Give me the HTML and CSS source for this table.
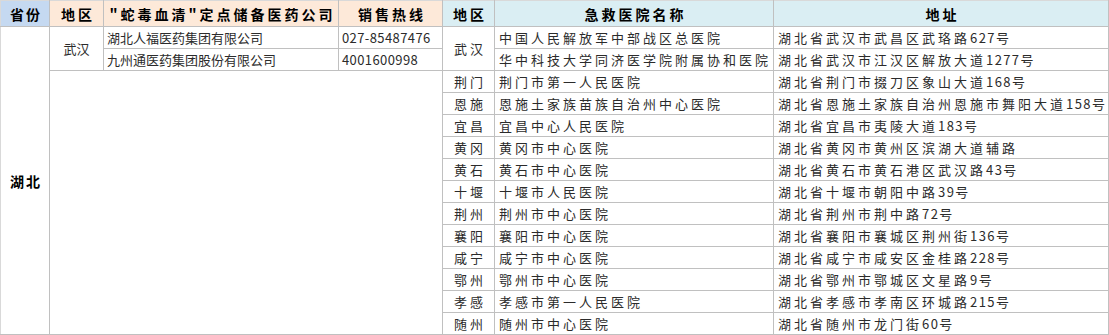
FILE: index.html
```html
<!DOCTYPE html>
<html lang="zh-CN">
<head>
<meta charset="utf-8">
<title>蛇毒血清定点储备</title>
<link rel="stylesheet" href="styles.css">
</head>
<body>
<table class="sheet">
  <colgroup>
    <col class="c-prov">
    <col class="c-reg">
    <col class="c-comp">
    <col class="c-tel">
    <col class="c-reg2">
    <col class="c-hosp">
    <col class="c-addr">
  </colgroup>
  <thead>
    <tr class="head">
      <th class="h-prov">省份</th>
      <th class="h-left">地区</th>
      <th class="h-left">"蛇毒血清"定点储备医药公司</th>
      <th class="h-left">销售热线</th>
      <th class="h-right">地区</th>
      <th class="h-right">急救医院名称</th>
      <th class="h-right">地址</th>
    </tr>
  </thead>
  <tbody>
    <tr>
      <td class="prov" rowspan="14">湖北</td>
      <td class="reg" rowspan="2">武汉</td>
      <td class="comp">湖北人福医药集团有限公司</td>
      <td class="tel">027-85487476</td>
      <td class="reg2" rowspan="2">武汉</td>
      <td class="hosp">中国人民解放军中部战区总医院</td>
      <td class="addr">湖北省武汉市武昌区武珞路<span class="num">627</span>号</td>
    </tr>
    <tr>
      <td class="comp">九州通医药集团股份有限公司</td>
      <td class="tel">4001600998</td>
      <td class="hosp">华中科技大学同济医学院附属协和医院</td>
      <td class="addr">湖北省武汉市江汉区解放大道<span class="num">1277</span>号</td>
    </tr>
    <tr>
      <td class="blank" colspan="3" rowspan="12"></td>
      <td class="reg2">荆门</td>
      <td class="hosp">荆门市第一人民医院</td>
      <td class="addr">湖北省荆门市掇刀区象山大道<span class="num">168</span>号</td>
    </tr>
    <tr>
      <td class="reg2">恩施</td>
      <td class="hosp">恩施土家族苗族自治州中心医院</td>
      <td class="addr">湖北省恩施土家族自治州恩施市舞阳大道<span class="num">158</span>号</td>
    </tr>
    <tr>
      <td class="reg2">宜昌</td>
      <td class="hosp">宜昌中心人民医院</td>
      <td class="addr">湖北省宜昌市夷陵大道<span class="num">183</span>号</td>
    </tr>
    <tr>
      <td class="reg2">黄冈</td>
      <td class="hosp">黄冈市中心医院</td>
      <td class="addr">湖北省黄冈市黄州区滨湖大道辅路</td>
    </tr>
    <tr>
      <td class="reg2">黄石</td>
      <td class="hosp">黄石市中心医院</td>
      <td class="addr">湖北省黄石市黄石港区武汉路<span class="num">43</span>号</td>
    </tr>
    <tr>
      <td class="reg2">十堰</td>
      <td class="hosp">十堰市人民医院</td>
      <td class="addr">湖北省十堰市朝阳中路<span class="num">39</span>号</td>
    </tr>
    <tr>
      <td class="reg2">荆州</td>
      <td class="hosp">荆州市中心医院</td>
      <td class="addr">湖北省荆州市荆中路<span class="num">72</span>号</td>
    </tr>
    <tr>
      <td class="reg2">襄阳</td>
      <td class="hosp">襄阳市中心医院</td>
      <td class="addr">湖北省襄阳市襄城区荆州街<span class="num">136</span>号</td>
    </tr>
    <tr>
      <td class="reg2">咸宁</td>
      <td class="hosp">咸宁市中心医院</td>
      <td class="addr">湖北省咸宁市咸安区金桂路<span class="num">228</span>号</td>
    </tr>
    <tr>
      <td class="reg2">鄂州</td>
      <td class="hosp">鄂州市中心医院</td>
      <td class="addr">湖北省鄂州市鄂城区文星路<span class="num">9</span>号</td>
    </tr>
    <tr>
      <td class="reg2">孝感</td>
      <td class="hosp">孝感市第一人民医院</td>
      <td class="addr">湖北省孝感市孝南区环城路<span class="num">215</span>号</td>
    </tr>
    <tr>
      <td class="reg2">随州</td>
      <td class="hosp">随州市中心医院</td>
      <td class="addr">湖北省随州市龙门街<span class="num">60</span>号</td>
    </tr>
  </tbody>
</table>
</body>
</html>
```

FILE: styles.css
```css
html, body {
  margin: 0;
  padding: 0;
  background: #ffffff;
}

.sheet {
  border-collapse: collapse;
  table-layout: fixed;
  width: 1108px;
  font-family: "Noto Sans CJK SC", "Noto Sans", sans-serif;
  font-size: 13px;
  color: #2b2b2b;
  border-top: 1px solid #d9d9d9;
  border-left: 1px solid #d9d9d9;
}

.c-prov { width: 49px; }
.c-reg { width: 54px; }
.c-comp { width: 235px; }
.c-tel { width: 104px; }
.c-reg2 { width: 52px; }
.c-hosp { width: 279px; }
.c-addr { width: 335px; }

.sheet th,
.sheet td {
  border: 1px solid #c0c0c0;
  padding: 0;
  line-height: 20px;
  white-space: nowrap;
  overflow: hidden;
  vertical-align: middle;
}

.sheet tr { height: 22px; }
.sheet tr.head { height: 26px; }

.sheet th {
  font-weight: bold;
  font-size: 14px;
  color: #000000;
  letter-spacing: 3px;
  padding-left: 3px;
  text-align: center;
}

.sheet .h-prov {
  background: #c5d9f1;
  border-top-color: #d9d9d9;
  border-left-color: #d9d9d9;
  letter-spacing: 2px;
  padding-left: 2px;
}
.sheet .h-left {
  background: #fde9d9;
  border-top-color: #d9d9d9;
}
.sheet .h-right {
  background: #daeef3;
  border-top-color: #d9d9d9;
}

.sheet .prov {
  font-weight: bold;
  font-size: 14px;
  color: #000000;
  letter-spacing: 2px;
  padding-left: 2px;
  text-align: center;
  border-left-color: #d9d9d9;
}

.sheet .reg {
  text-align: center;
}

.sheet .comp {
  padding-left: 3px;
}

.sheet .tel {
  padding-left: 3px;
  letter-spacing: 0.4px;
}

.sheet .reg2 {
  text-align: center;
  letter-spacing: 3px;
  padding-left: 3px;
}

.sheet .hosp {
  padding-left: 4px;
  letter-spacing: 3px;
}

.sheet .addr {
  padding-left: 4px;
  letter-spacing: 3px;
}

.num {
  letter-spacing: 1.4px;
}
```
